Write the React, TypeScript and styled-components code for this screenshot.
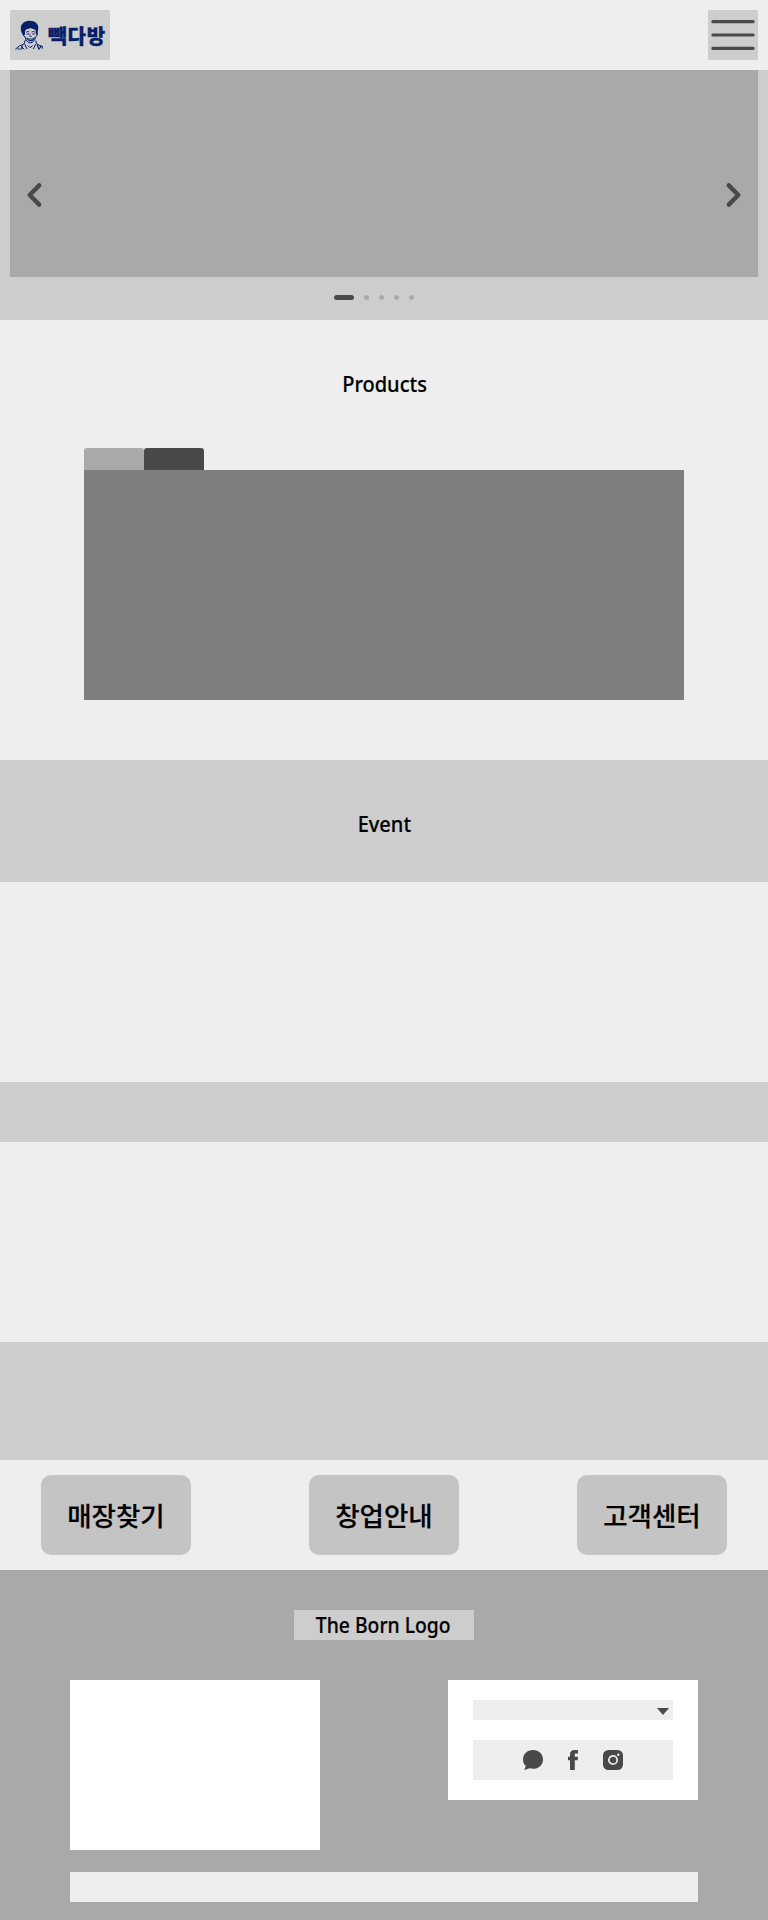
import React from "react";
import styled, { createGlobalStyle } from "styled-components";

const GlobalStyle = createGlobalStyle`
  * { box-sizing: border-box; }
  body {
    margin: 0;
    background: #eeeeee;
    color: #000;
    font-family: "Noto Sans", "Noto Sans CJK KR", sans-serif;
  }
  button { border: 0; padding: 0; font: inherit; color: inherit; }
  svg { display: block; }
`;

const Header = styled.header`
  display: flex;
  justify-content: space-between;
  height: 70px;
  padding: 10px;
  background: #eeeeee;
`;

const Logo = styled.div`
  display: flex;
  width: 100px;
  height: 50px;
  padding: 10px 0 0 5px;
  background: #cdcdcd;
  color: #061f68;
`;

const LogoName = styled.span`
  height: 30px;
  margin-left: 4px;
  font: 900 20px/31px "Noto Sans CJK KR", sans-serif;
  letter-spacing: 1px;
  white-space: nowrap;
  -webkit-text-stroke: 0.3px #061f68;
`;

const MenuButton = styled.button`
  width: 50px;
  height: 50px;
  background: #cdcdcd;
`;

const Hero = styled.section`
  height: 250px;
  padding: 0 10px;
  background: #cdcdcd;
`;

const Slide = styled.div`
  display: flex;
  justify-content: space-between;
  height: 207px;
  padding: 112px 16px 0;
  background: #a9a9a9;
`;

const ArrowButton = styled.button`
  width: 18px;
  height: 26px;
  background: none;
`;

const Pager = styled.div`
  display: flex;
  justify-content: center;
  gap: 10px;
  padding: 18px 20px 0 0;
`;

const Dot = styled.span<{ $active?: boolean }>`
  width: ${(p) => (p.$active ? 20 : 5)}px;
  height: 5px;
  border-radius: 3px;
  background: ${(p) => (p.$active ? "#494949" : "#a9a9a9")};
`;

const Products = styled.section`
  height: 440px;
  padding: 47px 84px 0;
`;

const Title = styled.h2`
  margin: 0;
  padding-left: 1px;
  font-size: 22px;
  font-weight: 500;
  line-height: 32px;
  text-align: center;
`;

const Condensed = styled.span<{ $scale: number }>`
  display: inline-block;
  transform: scaleX(${(p) => p.$scale});
  -webkit-text-stroke: 0.2px #000;
`;

const Tabs = styled.div`
  display: flex;
  margin-top: 49px;
`;

const Tab = styled.button<{ $active?: boolean }>`
  width: 60px;
  height: 22px;
  border-radius: 3px 3px 0 0;
  background: ${(p) => (p.$active ? "#494949" : "#a9a9a9")};
`;

const ProductPanel = styled.div`
  height: 230px;
  background: #7f7f7f;
`;

const Events = styled.section`
  height: 700px;
  padding-top: 47px;
  background: #cdcdcd;
`;

const EventBanner = styled.div<{ $gap: number }>`
  height: 200px;
  margin-top: ${(p) => p.$gap}px;
  background: #eeeeee;
`;

const QuickLinks = styled.nav`
  display: flex;
  justify-content: space-between;
  height: 110px;
  padding: 15px 41px;
`;

const QuickLink = styled.button`
  width: 150px;
  height: 80px;
  border-radius: 10px;
  background: #c4c4c4;
  font: 500 26.5px/80px "Noto Sans CJK KR", sans-serif;
  -webkit-text-stroke: 0.2px #000;
`;

const Footer = styled.footer`
  height: 350px;
  padding: 40px 70px 18px;
  background: #a9a9a9;
`;

const BornLogo = styled.div`
  width: 180px;
  height: 30px;
  margin: 0 auto 40px;
  padding-right: 2px;
  background: #cdcdcd;
  font-size: 21px;
  font-weight: 500;
  line-height: 30px;
  text-align: center;
  white-space: nowrap;
`;

const FooterRow = styled.div`
  display: flex;
  justify-content: space-between;
  align-items: flex-start;
`;

const InfoBox = styled.div`
  width: 250px;
  height: 170px;
  background: #fff;
`;

const LinkBox = styled.div`
  width: 250px;
  height: 120px;
  padding: 20px 25px;
  background: #fff;
`;

const Select = styled.div`
  display: flex;
  justify-content: flex-end;
  height: 20px;
  padding: 8px 4px 0 0;
  background: #eeeeee;
`;

const Social = styled.div`
  display: flex;
  justify-content: center;
  align-items: center;
  gap: 20px;
  height: 40px;
  margin-top: 20px;
  background: #eeeeee;
`;

const CopyrightBar = styled.div`
  height: 30px;
  margin-top: 22px;
  background: #eeeeee;
`;

function Portrait() {
  return (
    <svg width="29" height="30" viewBox="45 60 87 90" fill="none" stroke="#061f68" strokeWidth="3">
      <path
        d="M70 106 C64 99 60 87 64 76 C69 65 80 62 90 62 C105 62 115 71 115 84 L112 105 L107 101 L107 91 C103 86 97 87 91 84 C85 88 79 86 75 92 L75 104Z"
        fill="#061f68"
        stroke="none"
      />
      <path d="M71 99c-3 3-1 10 4 11 2 10 7 17 15 19 9-1 15-8 17-19 5-1 6-9 4-12" />
      <path d="M78 97c3-3 7-3 10-1M95 96c4-2 7-2 10 1M80 102h7M97 102h7" />
      <path d="M91 101l-2 8 7 1" strokeWidth="2" />
      <path d="M80 114c7 4 17 4 23-1-2 13-19 14-23 1z" fill="#061f68" strokeWidth="2" />
      <path d="M83 116c6 2 11 2 17 0-3 4-13 5-17 0z" fill="#cdcdcd" stroke="none" />
      <path d="M76 120l-4 12-14 6-12 10M107 122l4 11 9 4 7 3v6" />
      <path d="M63 139l10 9M74 132l7 15M107 132l-7 15M84 137l6 6 8-6" />
      <path d="M111 134l6 13 6-8M67 137l-2 11M52 147h10M120 139h7" strokeWidth="3.5" />
    </svg>
  );
}

function Arrow({ right }: { right?: boolean }) {
  return (
    <ArrowButton aria-label={right ? "다음" : "이전"}>
      <svg width="18" height="26" fill="none" stroke="#494949" strokeWidth="4.4" strokeLinecap="round" strokeLinejoin="round">
        <path d={right ? "M4.8 3.4L14.3 13L4.8 22.6" : "M13.2 3.4L3.7 13L13.2 22.6"} />
      </svg>
    </ArrowButton>
  );
}

export default function App() {
  return (
    <>
      <GlobalStyle />
      <Header>
        <Logo>
          <Portrait />
          <LogoName>빽다방</LogoName>
        </Logo>
        <MenuButton aria-label="메뉴">
          <svg width="50" height="50" stroke="#494949" strokeWidth="3.2" strokeLinecap="round">
            <path d="M4.9 11.7H45.1M4.9 25H45.1M4.9 38.3H45.1" />
          </svg>
        </MenuButton>
      </Header>
      <main>
        <Hero>
          <Slide>
            <Arrow />
            <Arrow right />
          </Slide>
          <Pager>
            <Dot $active />
            <Dot />
            <Dot />
            <Dot />
            <Dot />
          </Pager>
        </Hero>
        <Products>
          <Title>
            <Condensed $scale={0.91}>Products</Condensed>
          </Title>
          <Tabs>
            <Tab />
            <Tab $active />
          </Tabs>
          <ProductPanel />
        </Products>
        <Events>
          <Title>
            <Condensed $scale={0.91}>Event</Condensed>
          </Title>
          <EventBanner $gap={43} />
          <EventBanner $gap={60} />
        </Events>
        <QuickLinks>
          <QuickLink>매장찾기</QuickLink>
          <QuickLink>창업안내</QuickLink>
          <QuickLink>고객센터</QuickLink>
        </QuickLinks>
      </main>
      <Footer>
        <BornLogo>
          <Condensed $scale={0.92}>The Born Logo</Condensed>
        </BornLogo>
        <FooterRow>
          <InfoBox />
          <LinkBox>
            <Select>
              <svg width="12" height="7" fill="#494949">
                <path d="M0 0H12L6 7Z" />
              </svg>
            </Select>
            <Social>
              <svg width="20" height="20" fill="#494949">
                <path d="M10 0C15.8 0 20 4 20 9.4S15.8 18.8 10 18.8C8.7 18.8 7.8 18.6 6.8 18.3L1.2 20L2.8 16C1 14.5 0 12 0 9.4C0 4 4.2 0 10 0Z" />
              </svg>
              <svg width="20" height="20" fill="#494949">
                <path d="M7 20V10.2H5V6.8H7V4.6C7 1.5 8.5 0 11.5 0H15V3.4H12.8C12 3.4 11.8 3.8 11.8 4.8V6.8H15L14.7 10.2H11.8V20Z" />
              </svg>
              <svg width="20" height="20">
                <rect width="20" height="20" rx="5.5" fill="#494949" />
                <circle cx="10" cy="10" r="4.2" fill="none" stroke="#eeeeee" strokeWidth="1.7" />
                <circle cx="15.3" cy="4.7" r="1.2" fill="#eeeeee" />
              </svg>
            </Social>
          </LinkBox>
        </FooterRow>
        <CopyrightBar />
      </Footer>
    </>
  );
}
